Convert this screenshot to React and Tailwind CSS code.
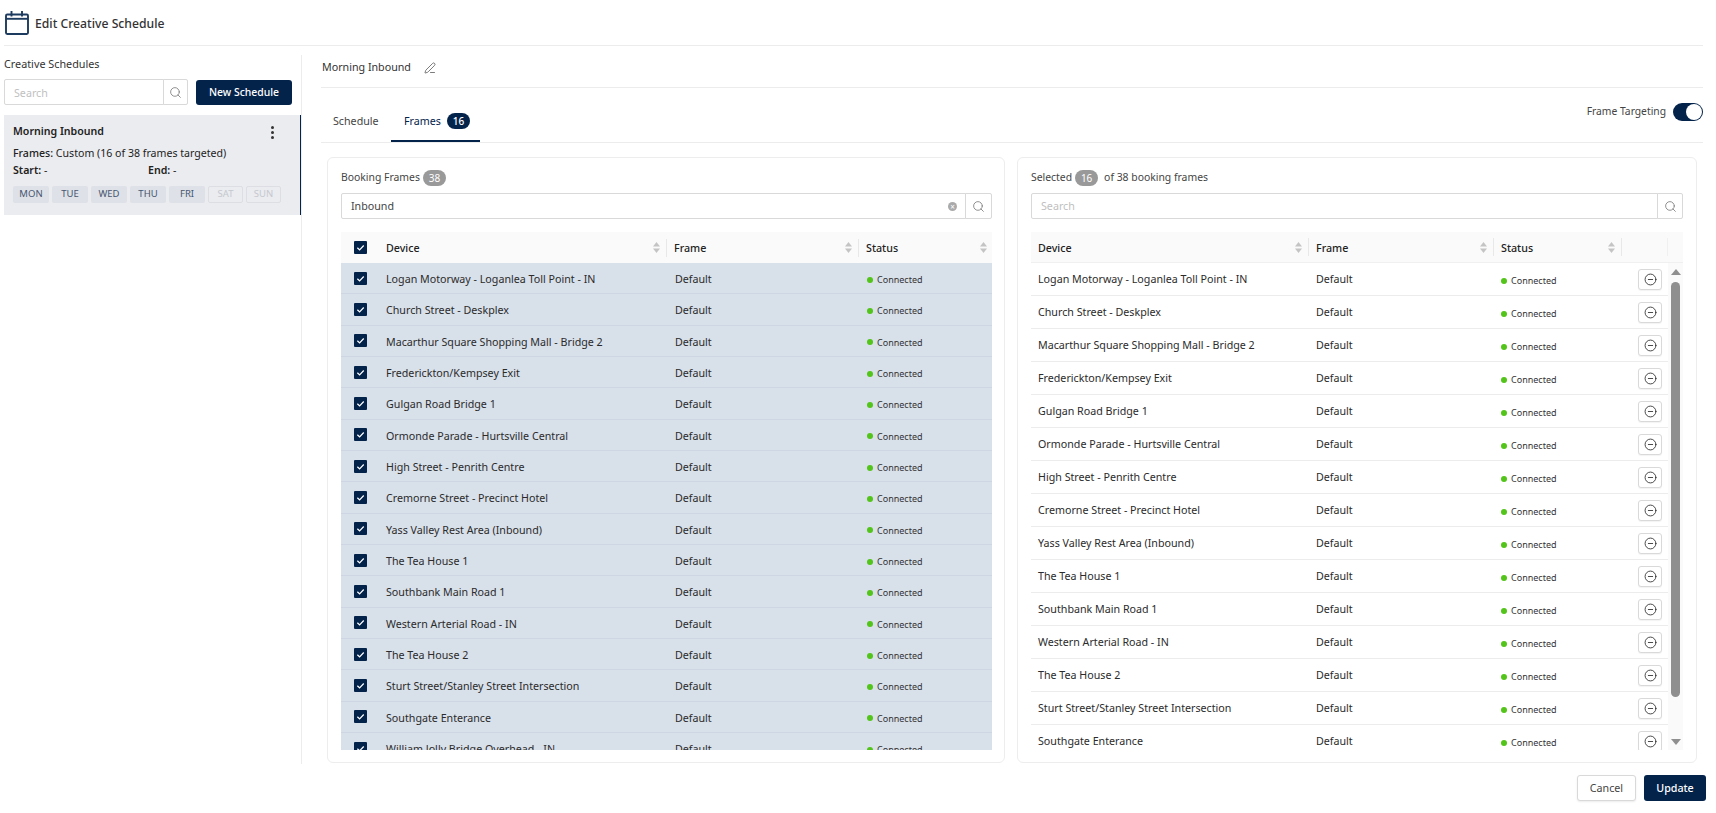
import { CircleMinus, PenLine, Search } from "lucide-react";

const NAVY = "bg-[#03234b]";

const devices = [
  "Logan Motorway - Loganlea Toll Point - IN",
  "Church Street - Deskplex",
  "Macarthur Square Shopping Mall - Bridge 2",
  "Frederickton/Kempsey Exit",
  "Gulgan Road Bridge 1",
  "Ormonde Parade - Hurtsville Central",
  "High Street - Penrith Centre",
  "Cremorne Street - Precinct Hotel",
  "Yass Valley Rest Area (Inbound)",
  "The Tea House 1",
  "Southbank Main Road 1",
  "Western Arterial Road - IN",
  "The Tea House 2",
  "Sturt Street/Stanley Street Intersection",
  "Southgate Enterance",
  "William Jolly Bridge Overhead - IN",
];

const days = ["MON", "TUE", "WED", "THU", "FRI"];

function CalendarIcon() {
  return (
    <svg className="w-[24px] h-[24px] text-[#1d3b5f]" viewBox="0 0 24 24" fill="none" stroke="currentColor" strokeWidth="1.9">
      <rect x="1" y="3.5" width="22" height="19.5" rx="1.2" />
      <path d="M1 7.8h22" />
      <path d="M6.5 0v5.5M17 0v5.5" />
    </svg>
  );
}

function SortCaret() {
  return (
    <svg className="w-[7px] h-[11px] text-[#c4c4c4]" viewBox="0 0 7 11" fill="currentColor">
      <path d="M3.5 0 7 4.5H0Z" />
      <path d="M3.5 11 0 6.5h7Z" />
    </svg>
  );
}

function Checkbox() {
  return (
    <span className={`flex items-center justify-center w-[13px] h-[13px] rounded-[1px] ${NAVY}`}>
      <svg className="w-[9px] h-[9px] text-white" viewBox="0 0 10 10" fill="none" stroke="currentColor" strokeWidth="1.4">
        <path d="M1.5 5.2 4 7.6l4.6-4.8" />
      </svg>
    </span>
  );
}

function Connected() {
  return (
    <span className="flex items-center gap-[4px] text-[9px] text-[#333]">
      <span className="w-[6px] h-[6px] rounded-full bg-[#52c41a]" />
      Connected
    </span>
  );
}

function HeadCell({ label, last }) {
  return (
    <div className={`flex items-center justify-between h-[18px] pl-[7px] pr-[6px] text-[10.7px] font-medium text-[#222] ${last ? "" : "border-r border-[#e8e8e8]"}`}>
      <span className="pt-[2px]">{label}</span>
      <SortCaret />
    </div>
  );
}

function SearchButton({ className }) {
  return (
    <button className={`flex items-center justify-center border border-[#d9d9d9] bg-white ${className}`}>
      <Search className="w-[13px] h-[13px] text-[#777]" strokeWidth={1.5} />
    </button>
  );
}

function BookingTable() {
  return (
    <div className="mt-[13px] h-[518px] overflow-hidden">
      <div className="grid grid-cols-[38px_288px_192px_134px] items-center h-[31px] bg-[#fafafa]">
        <div className="pl-[13px]"><Checkbox /></div>
        <HeadCell label="Device" />
        <HeadCell label="Frame" />
        <HeadCell label="Status" last />
      </div>
      {devices.map((name) => (
        <div key={name} className="grid grid-cols-[38px_288px_192px_134px] items-center h-[31.33px] bg-[#d8e0ea] border-b border-[#cdd6e2] text-[10.7px] text-[#2b2b2b]">
          <div className="pl-[13px]"><Checkbox /></div>
          <div className="pl-[7px] pt-[2px]">{name}</div>
          <div className="pl-[8px] pt-[2px]">Default</div>
          <div className="pl-[8px] pt-[3px]"><Connected /></div>
        </div>
      ))}
    </div>
  );
}

function SelectedTable() {
  return (
    <div className="mt-[13px] h-[518px] overflow-hidden">
      <div className="grid grid-cols-[278px_185px_128px_46px_15px] items-center h-[31px] bg-[#fafafa] border-b border-[#f0f0f0]">
        <HeadCell label="Device" />
        <HeadCell label="Frame" />
        <HeadCell label="Status" />
        <div className="h-[18px] border-r border-[#f0f0f0]" />
        <div />
      </div>
      <div className="flex">
        <div className="w-[637px] shrink-0">
          {devices.map((name) => (
            <div key={name} className="grid grid-cols-[278px_185px_128px_46px] items-center h-[33px] border-b border-[#ececec] text-[10.7px] text-[#2b2b2b]">
              <div className="pl-[7px] pt-[1px]">{name}</div>
              <div className="pl-[7px] pt-[1px]">Default</div>
              <div className="pl-[7px] pt-[3px]"><Connected /></div>
              <div className="pl-[16px]">
                <button className="flex items-center justify-center w-[24px] h-[21px] rounded-[3px] border border-[#d9d9d9] bg-white shadow-[0_1px_1px_rgba(0,0,0,0.05)]">
                  <CircleMinus className="w-[13px] h-[13px] text-[#222]" strokeWidth={1.5} />
                </button>
              </div>
            </div>
          ))}
        </div>
        <div className="flex flex-col items-center w-[15px] h-[487px] bg-[#fafafa]">
          <span className="mt-[6px] w-0 h-0 border-x-[5px] border-x-transparent border-b-[6px] border-b-[#8f8f8f]" />
          <span className="mt-[7px] w-[9px] h-[415px] rounded-full bg-[#8f8f8f]" />
          <span className="mt-auto mb-[5px] w-0 h-0 border-x-[5px] border-x-transparent border-t-[6px] border-t-[#8f8f8f]" />
        </div>
      </div>
    </div>
  );
}

export default function App() {
  return (
    <div className="w-full h-[813px] overflow-hidden bg-white font-['Noto_Sans',sans-serif]">
      <header className="flex items-center gap-[6px] h-[46px] ml-[4px] mr-[13px] pl-[1px] border-b border-[#ececec]">
        <CalendarIcon />
        <span className="pt-[3px] text-[12.2px] font-medium text-[#333]">Edit Creative Schedule</span>
      </header>

      <div className="flex pt-[9px]">
        <aside className="w-[298px] h-[709px] ml-[4px] border-r border-[#ececec]">
          <div className="text-[10.8px] leading-[18px] text-[#333]">Creative Schedules</div>
          <div className="flex items-end mt-[6px]">
            <input
              placeholder="Search"
              readOnly
              className="w-[160px] h-[26px] px-[9px] pt-[1px] border border-[#d9d9d9] rounded-l-[2px] text-[10.7px] outline-none placeholder:text-[#bfbfbf]"
            />
            <SearchButton className="w-[25px] h-[26px] -ml-px rounded-r-[2px]" />
            <button className={`ml-[8px] w-[96px] h-[25px] pt-[1px] rounded-[3px] ${NAVY} text-[10.4px] font-medium text-white`}>New Schedule</button>
          </div>
          <div className="mt-[10px] w-[297px] h-[100px] pl-[9px] pr-[2px] pt-[8px] bg-[#ebecf0] border-r-[1.5px] border-[#03234b] text-[10.6px] text-[#222]">
            <div className="flex items-center justify-between h-[18px] pr-[24px] font-semibold">
              Morning Inbound
              <span className="flex flex-col gap-[2px]">
                <span className="w-[3px] h-[3px] rounded-full bg-[#333]" />
                <span className="w-[3px] h-[3px] rounded-full bg-[#333]" />
                <span className="w-[3px] h-[3px] rounded-full bg-[#333]" />
              </span>
            </div>
            <div className="mt-[4px] leading-[17px]"><span className="font-medium">Frames:</span> Custom (16 of 38 frames targeted)</div>
            <div className="grid grid-cols-[135px_1fr] leading-[17px]">
              <div><span className="font-semibold">Start:</span> -</div>
              <div><span className="font-semibold">End:</span> -</div>
            </div>
            <div className="flex gap-[3px] mt-[7px]">
              {days.map((d) => (
                <span key={d} className="flex shrink-0 items-center justify-center w-[36px] h-[17px] rounded-[2px] bg-[#dee1e7] text-[9.5px] text-[#475670]">{d}</span>
              ))}
              {["SAT", "SUN"].map((d) => (
                <span key={d} className="flex shrink-0 items-center justify-center w-[35px] h-[17px] rounded-[2px] border border-[#dcdee3] text-[9.5px] text-[#c5c8ce]">{d}</span>
              ))}
            </div>
          </div>
        </aside>

        <main className="flex-1 ml-[19px] mr-[13px] -mt-[9px]">
          <div className="flex items-center gap-[13px] h-[42px] pl-px pt-[2px] border-b border-[#ececec] text-[10.7px] text-[#333]">
            Morning Inbound
            <PenLine className="w-[12px] h-[12px] text-[#444]" strokeWidth={1.4} />
          </div>

          <div className="flex items-start justify-between h-[55px] border-b border-[#ececec]">
            <div className="flex items-stretch h-[55px] pt-[22px] text-[10.7px]">
              <div className="flex items-start h-[32px] w-[70px] pt-[3px] pl-[12px] text-[#444]">Schedule</div>
              <div className="flex items-start gap-[6px] h-[32px] w-[89px] pt-[3px] pl-[13px] border-b-2 border-[#03234b] text-[#03234b]">
                Frames
                <span className={`flex items-center justify-center w-[23px] h-[16px] rounded-full ${NAVY} text-[10px] font-medium text-white`}>16</span>
              </div>
            </div>
            <div className="flex items-center gap-[7px] mt-[15px] text-[10.3px] text-[#444]">
              Frame Targeting
              <span className={`flex items-center justify-end w-[30px] h-[18px] pr-[1px] rounded-full ${NAVY}`}>
                <span className="w-[16px] h-[16px] rounded-full bg-white" />
              </span>
            </div>
          </div>

          <div className="flex gap-[12px] mt-[14px] ml-[6px]">
            <section className="w-[678px] h-[606px] shrink-0 pl-[13px] pr-[12px] pt-[11px] border border-[#ededed] rounded-[6px] bg-white">
              <div className="flex items-center gap-[3px] h-[18px] text-[10.4px] text-[#444]">
                Booking Frames
                <span className="flex items-center justify-center w-[23px] h-[16px] rounded-full bg-[#999] text-[10px] text-white">38</span>
              </div>
              <div className="flex mt-[6px]">
                <div className="flex items-center justify-between flex-1 h-[26px] pl-[9px] pr-[8px] pt-[1px] border border-[#d9d9d9] rounded-l-[2px] text-[10.7px] text-[#444]">
                  Inbound
                  <span className="flex items-center justify-center w-[9px] h-[9px] rounded-full bg-[#aaa] text-[8px] leading-none text-white">×</span>
                </div>
                <SearchButton className="w-[27px] h-[26px] -ml-px rounded-r-[2px]" />
              </div>
              <BookingTable />
            </section>

            <section className="w-[680px] h-[606px] shrink-0 pl-[13px] pr-[13px] pt-[11px] border border-[#ededed] rounded-[6px] bg-white">
              <div className="flex items-center gap-[3px] h-[18px] text-[10.4px] text-[#444]">
                Selected
                <span className="flex items-center justify-center w-[23px] h-[16px] mr-[3px] rounded-full bg-[#999] text-[10px] text-white">16</span>
                of 38 booking frames
              </div>
              <div className="flex mt-[6px]">
                <div className="flex items-center flex-1 h-[26px] pl-[9px] pt-[1px] border border-[#d9d9d9] rounded-l-[2px] text-[10.7px] text-[#bfbfbf]">Search</div>
                <SearchButton className="w-[26px] h-[26px] -ml-px rounded-r-[2px]" />
              </div>
              <SelectedTable />
            </section>
          </div>

          <div className="flex justify-end gap-[8px] mt-[12px] -mr-[3px]">
            <button className="w-[59px] h-[26px] rounded-[3px] border border-[#d9d9d9] bg-white text-[10.7px] text-[#444] shadow-[0_1px_2px_rgba(0,0,0,0.08)]">Cancel</button>
            <button className={`w-[62px] h-[26px] rounded-[3px] ${NAVY} text-[10.7px] font-medium text-white`}>Update</button>
          </div>
        </main>
      </div>
    </div>
  );
}
